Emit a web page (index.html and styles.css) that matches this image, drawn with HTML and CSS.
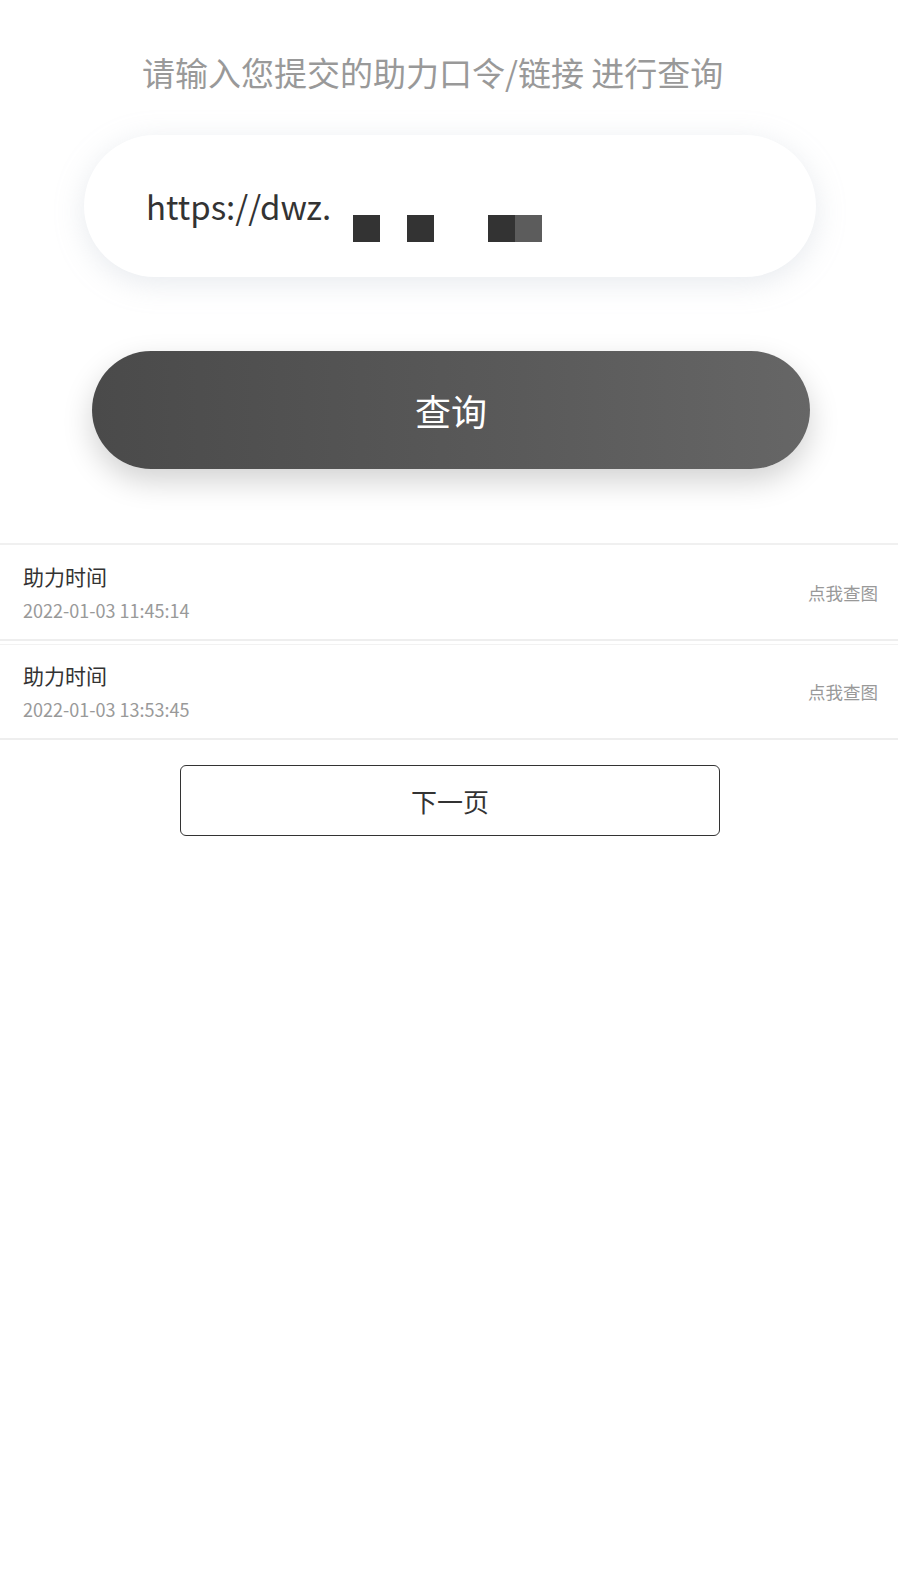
FILE: index.html
```html
<!DOCTYPE html>
<html lang="zh-CN">
<head>
<meta charset="utf-8">
<title>助力查询</title>
<link rel="stylesheet" href="styles.css">
</head>
<body>
<div class="page">
  <h1 class="title">请输入您提交的助力口令/链接 进行查询</h1>
  <div class="input-card">
    <span class="input-text">https://dwz.</span>
    <span class="mosaic">
      <i class="blk"></i><i class="gap"></i><i class="blk"></i><i class="gap"></i><i class="gap"></i><i class="blk"></i><i class="blk light"></i>
    </span>
  </div>
  <div class="btn-wrap">
    <button class="query-btn">查询</button>
  </div>
  <ul class="list">
    <li class="row">
      <div class="row-main">
        <div class="row-title">助力时间</div>
        <div class="row-date">2022-01-03 11:45:14</div>
      </div>
      <a class="row-link">点我查图</a>
    </li>
    <li class="row">
      <div class="row-main">
        <div class="row-title">助力时间</div>
        <div class="row-date">2022-01-03 13:53:45</div>
      </div>
      <a class="row-link">点我查图</a>
    </li>
  </ul>
  <div class="pager">
    <button class="next-btn">下一页</button>
  </div>
</div>
</body>
</html>
```

FILE: styles.css
```css
* { box-sizing: border-box; }
html, body {
  margin: 0;
  padding: 0;
  background: #fff;
  font-family: "Noto Sans CJK SC", "Noto Sans", sans-serif;
}
.page {
  width: 900px;
  padding-top: 49px;
}
.title {
  margin: 0;
  padding-left: 142px;
  font-size: 33px;
  font-weight: 400;
  line-height: 46px;
  color: #999;
}
.input-card {
  margin: 40px 84px 0 84px;
  height: 142px;
  border-radius: 71px;
  background: #fff;
  box-shadow: 0 6px 30px rgba(170, 180, 195, 0.28);
  display: flex;
  align-items: flex-start;
  padding: 55px 0 0 62px;
}
.input-text {
  font-size: 33px;
  color: #333;
  line-height: 1;
}
.mosaic {
  display: flex;
  margin-left: 22px;
  margin-top: 25px;
}
.mosaic i {
  display: block;
  width: 27px;
  height: 27px;
}
.mosaic .blk { background: #333; }
.mosaic .blk.light { background: #5c5c5c; }
.btn-wrap {
  padding: 74px 90px 0 92px;
}
.query-btn {
  display: block;
  width: 100%;
  height: 118px;
  border: 0;
  border-radius: 59px;
  background: linear-gradient(90deg, #4a4a4a 0%, #5a5a5a 60%, #666 100%);
  box-shadow: 0 12px 30px rgba(0, 0, 0, 0.18);
  color: #fff;
  font-family: inherit;
  font-size: 36px;
  padding: 0;
}
.list {
  list-style: none;
  margin: 74px 2px 0 0;
  padding: 0;
  border-top: 2px solid #f0f0f0;
}
.row {
  display: flex;
  align-items: center;
  justify-content: space-between;
  height: 96px;
  padding: 0 20px 0 23px;
  border-bottom: 2px solid #eeeeee;
}
.row + .row { margin-top: 3px; border-top: 1px solid #f2f2f2; }
.row-title {
  font-size: 21px;
  color: #333;
  line-height: 28px;
}
.row-date {
  font-size: 18px;
  color: #999;
  line-height: 26px;
  margin-top: 7px;
}
.row-link {
  font-size: 17.5px;
  color: #999;
}
.pager {
  padding-top: 25px;
  display: flex;
  justify-content: center;
}
.next-btn {
  width: 540px;
  height: 71px;
  border: 1.5px solid #333;
  border-radius: 6px;
  background: #fff;
  color: #333;
  font-family: inherit;
  font-size: 26px;
  padding: 0;
}
```
